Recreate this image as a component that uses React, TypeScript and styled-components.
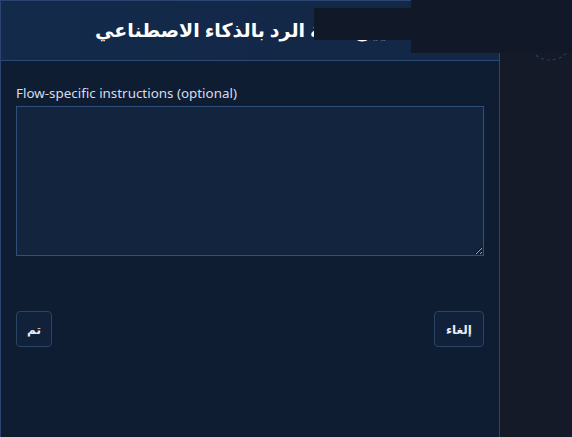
import React from 'react';
import styled, { createGlobalStyle } from 'styled-components';

const GlobalStyle = createGlobalStyle`
  html, body {
    margin: 0;
    padding: 0;
    height: 100%;
    background: #141a28;
  }
  #root {
    height: 100%;
  }
`;

function App() {
  return (
    <>
      <GlobalStyle />
      <Page>
        <Panel>
          <Header>
            <h2 dir="rtl">تعيين حالة الرد بالذكاء الاصطناعي</h2>
          </Header>
          <Body>
            <Label htmlFor="flow-instructions">
              Flow-specific instructions (optional)
            </Label>
            <TextArea id="flow-instructions" />
            <Footer>
              <ActionButton dir="rtl" $pad={10}>تم</ActionButton>
              <ActionButton dir="rtl" $pad={11}>إلغاء</ActionButton>
            </Footer>
          </Body>
        </Panel>
        <Side />
        <Spinner width="48" height="48" viewBox="0 0 48 48">
          <circle
            cx="24"
            cy="24"
            r="23"
            fill="none"
            stroke="#2c3b57"
            strokeWidth="1.2"
            strokeDasharray="3 3"
          />
        </Spinner>
        <CoverWide />
        <CoverSmall />
      </Page>
    </>
  );
}

export default App;

const Page = styled.div`
  position: relative;
  display: flex;
  height: 100%;
  min-height: 437px;
  overflow: hidden;
`;

const Panel = styled.div`
  width: 500px;
  flex-shrink: 0;
  display: flex;
  flex-direction: column;
  box-sizing: border-box;
  border: 1px solid #2a4570;
  border-bottom: none;
  background: #0f1d33;
`;

const Header = styled.div`
  height: 59px;
  display: flex;
  align-items: center;
  justify-content: center;
  border-bottom: 1px solid #2a4a75;
  background: linear-gradient(90deg, #132a4a 0%, #132746 100%);

  h2 {
    margin: 0;
    padding-bottom: 2px;
    font-family: 'Noto Sans', 'DejaVu Sans', sans-serif;
    font-weight: 700;
    font-size: 19px;
    color: #ffffff;
  }
`;

const Body = styled.div`
  display: flex;
  flex-direction: column;
  padding: 23px 15px 0;
`;

const Label = styled.label`
  font-family: 'Noto Sans', 'DejaVu Sans', sans-serif;
  font-size: 13.4px;
  line-height: 19px;
  color: #d4deec;
  margin-bottom: 3px;
`;

const TextArea = styled.textarea`
  box-sizing: border-box;
  width: 468px;
  height: 150px;
  margin: 0;
  padding: 8px;
  border: 1px solid #30507a;
  border-radius: 0;
  background: #13243e;
  color: #e2e8f0;
  outline: none;
  resize: vertical;
  color-scheme: dark;
`;

const Footer = styled.div`
  display: flex;
  justify-content: space-between;
  margin-top: 55px;
  width: 468px;
`;

const ActionButton = styled.button<{ $pad: number }>`
  box-sizing: border-box;
  height: 36px;
  min-width: 35px;
  padding: 0 ${(p) => p.$pad}px;
  border: 1px solid #2a4466;
  border-radius: 4px;
  background: #12213a;
  color: #e6eef9;
  font-family: 'Noto Sans', 'DejaVu Sans', sans-serif;
  font-weight: 700;
  font-size: 12px;
  cursor: pointer;
`;

const Side = styled.div`
  flex: 1;
  background: #141a28;
`;

const Spinner = styled.svg`
  position: absolute;
  left: 526px;
  top: 13px;
`;

const CoverWide = styled.div`
  position: absolute;
  left: 411px;
  top: 0;
  width: 161px;
  height: 53px;
  background: #111827;
`;

const CoverSmall = styled.div`
  position: absolute;
  left: 314px;
  top: 8px;
  width: 97px;
  height: 32px;
  background: #111827;
`;
